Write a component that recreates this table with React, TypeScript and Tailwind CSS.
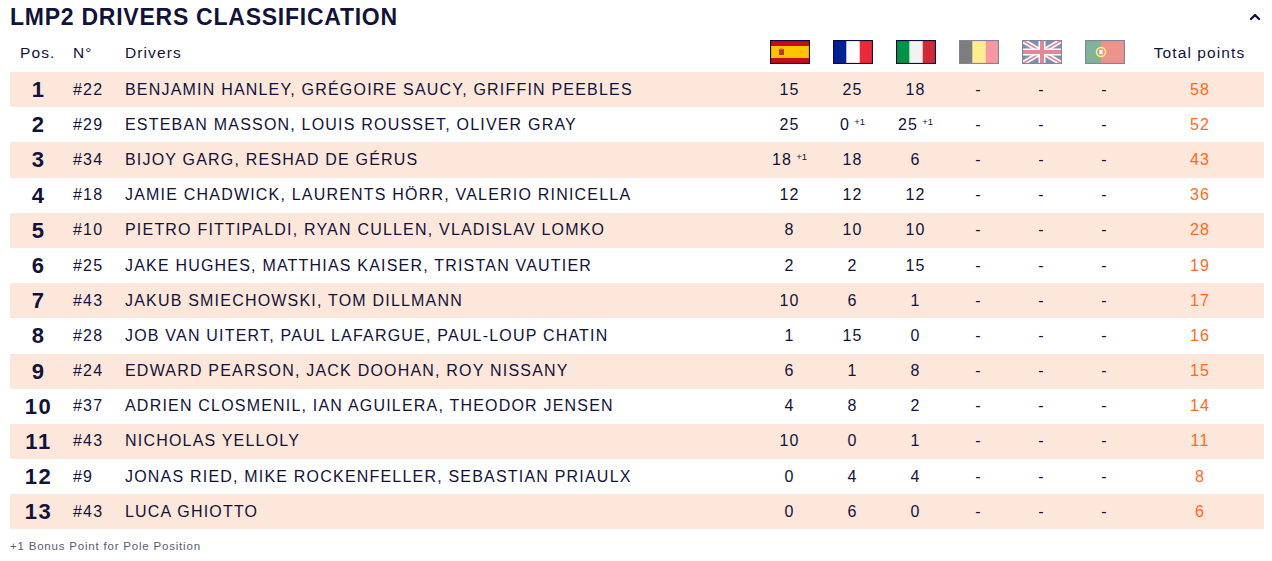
import { ChevronUp } from "lucide-react";

type Pts = number | [number, boolean];

type Row = {
  pos: number;
  car: string;
  drivers: string;
  pts: Pts[];
  total: number;
};

const rows: Row[] = [
  { pos: 1, car: "#22", drivers: "BENJAMIN HANLEY, GRÉGOIRE SAUCY, GRIFFIN PEEBLES", pts: [15, 25, 18], total: 58 },
  { pos: 2, car: "#29", drivers: "ESTEBAN MASSON, LOUIS ROUSSET, OLIVER GRAY", pts: [25, [0, true], [25, true]], total: 52 },
  { pos: 3, car: "#34", drivers: "BIJOY GARG, RESHAD DE GÉRUS", pts: [[18, true], 18, 6], total: 43 },
  { pos: 4, car: "#18", drivers: "JAMIE CHADWICK, LAURENTS HÖRR, VALERIO RINICELLA", pts: [12, 12, 12], total: 36 },
  { pos: 5, car: "#10", drivers: "PIETRO FITTIPALDI, RYAN CULLEN, VLADISLAV LOMKO", pts: [8, 10, 10], total: 28 },
  { pos: 6, car: "#25", drivers: "JAKE HUGHES, MATTHIAS KAISER, TRISTAN VAUTIER", pts: [2, 2, 15], total: 19 },
  { pos: 7, car: "#43", drivers: "JAKUB SMIECHOWSKI, TOM DILLMANN", pts: [10, 6, 1], total: 17 },
  { pos: 8, car: "#28", drivers: "JOB VAN UITERT, PAUL LAFARGUE, PAUL-LOUP CHATIN", pts: [1, 15, 0], total: 16 },
  { pos: 9, car: "#24", drivers: "EDWARD PEARSON, JACK DOOHAN, ROY NISSANY", pts: [6, 1, 8], total: 15 },
  { pos: 10, car: "#37", drivers: "ADRIEN CLOSMENIL, IAN AGUILERA, THEODOR JENSEN", pts: [4, 8, 2], total: 14 },
  { pos: 11, car: "#43", drivers: "NICHOLAS YELLOLY", pts: [10, 0, 1], total: 11 },
  { pos: 12, car: "#9", drivers: "JONAS RIED, MIKE ROCKENFELLER, SEBASTIAN PRIAULX", pts: [0, 4, 4], total: 8 },
  { pos: 13, car: "#43", drivers: "LUCA GHIOTTO", pts: [0, 6, 0], total: 6 },
];

const grid = "grid grid-cols-[56px_59px_1fr_63px_63px_63px_63px_63px_63px_128px] items-center";

function Flag({ code, faded }: { code: string; faded?: boolean }) {
  return (
    <svg
      viewBox="0 0 40 24"
      className={`w-10 h-6 ${faded ? "opacity-50" : ""}`}
    >
      {code === "es" && (
        <>
          <rect width="40" height="24" fill="#c60b1e" />
          <rect y="6" width="40" height="12" fill="#ffc400" />
          <rect x="9" y="9" width="5" height="6" fill="#ad1519" opacity="0.8" />
          <rect x="10" y="8" width="3" height="1.5" fill="#c8a400" />
        </>
      )}
      {code === "fr" && (
        <>
          <rect width="14" height="24" fill="#002395" />
          <rect x="13.3" width="13.4" height="24" fill="#ffffff" />
          <rect x="26.7" width="13.3" height="24" fill="#ed2939" />
        </>
      )}
      {code === "it" && (
        <>
          <rect width="14" height="24" fill="#009246" />
          <rect x="13.3" width="13.4" height="24" fill="#f1f2f1" />
          <rect x="26.7" width="13.3" height="24" fill="#ce2b37" />
        </>
      )}
      {code === "be" && (
        <>
          <rect width="14" height="24" fill="#000000" />
          <rect x="13.3" width="13.4" height="24" fill="#fdda24" />
          <rect x="26.7" width="13.3" height="24" fill="#ef3340" />
        </>
      )}
      {code === "gb" && (
        <>
          <rect width="40" height="24" fill="#012169" />
          <path d="M0 0L40 24M40 0L0 24" stroke="#ffffff" strokeWidth="5" />
          <path d="M0 0L40 24M40 0L0 24" stroke="#c8102e" strokeWidth="1.6" />
          <path d="M20 0V24M0 12H40" stroke="#ffffff" strokeWidth="7" />
          <path d="M20 0V24M0 12H40" stroke="#c8102e" strokeWidth="4" />
        </>
      )}
      {code === "pt" && (
        <>
          <rect width="16" height="24" fill="#046a38" />
          <rect x="16" width="24" height="24" fill="#da291c" />
          <circle cx="16" cy="12" r="4.5" fill="none" stroke="#ffe900" strokeWidth="1.5" />
          <rect x="14" y="9.5" width="4" height="5" rx="1" fill="#ffffff" stroke="#da291c" strokeWidth="0.8" />
        </>
      )}
      <rect x="0.5" y="0.5" width="39" height="23" fill="none" stroke="#0e0c3a" strokeWidth="1.2" />
    </svg>
  );
}

function PointCell({ p }: { p: Pts }) {
  const value = Array.isArray(p) ? p[0] : p;
  const bonus = Array.isArray(p) && p[1];
  return (
    <div className="flex justify-center items-baseline">
      <span>{value}</span>
      {bonus && <span className="ml-[4px] text-[9.5px] tracking-normal relative -top-[5px]">+1</span>}
    </div>
  );
}

export default function App() {
  return (
    <div className="min-h-[561px] bg-white pl-[10px] pr-[8px] pt-[3px] text-[#12123a] font-['Liberation_Sans',Arial,sans-serif]">
      <div className="flex items-center justify-between h-[29px]">
        <h1 className="text-[23px] font-bold tracking-[0.75px] leading-none">
          LMP2 DRIVERS CLASSIFICATION
        </h1>
        <ChevronUp className="w-4 h-4 mr-[1px] mt-[-2px]" strokeWidth={3.5} />
      </div>

      <div className={`${grid} h-[40px] pt-[2px] text-[15.5px] tracking-[1.1px]`}>
        <div className="pl-[10px]">Pos.</div>
        <div className="pl-[7px]">N°</div>
        <div>Drivers</div>
        {["es", "fr", "it", "be", "gb", "pt"].map((c, i) => (
          <div key={c} className="flex justify-center -mt-[2px]">
            <Flag code={c} faded={i > 2} />
          </div>
        ))}
        <div className="text-center pr-[1px]">Total points</div>
      </div>

      <div>
        {rows.map((r) => (
          <div
            key={r.pos}
            className={`${grid} h-[35.2px] text-[16px] tracking-[1.2px] ${r.pos % 2 === 1 ? "bg-[#fde6da]" : "bg-white"}`}
          >
            <div className="text-center text-[22px] font-bold tracking-[1.5px] pl-[1px]">{r.pos}</div>
            <div className="pl-[7px]">{r.car}</div>
            <div className="whitespace-nowrap">{r.drivers}</div>
            {r.pts.map((p, i) => (
              <PointCell key={i} p={p} />
            ))}
            {[0, 1, 2].map((i) => (
              <div key={i} className="text-center">-</div>
            ))}
            <div className="text-center text-[#ff6b1a]">{r.total}</div>
          </div>
        ))}
      </div>

      <p className="mt-[9px] text-[11.5px] tracking-[0.8px] text-[#5a5a6e]">+1 Bonus Point for Pole Position</p>
    </div>
  );
}
